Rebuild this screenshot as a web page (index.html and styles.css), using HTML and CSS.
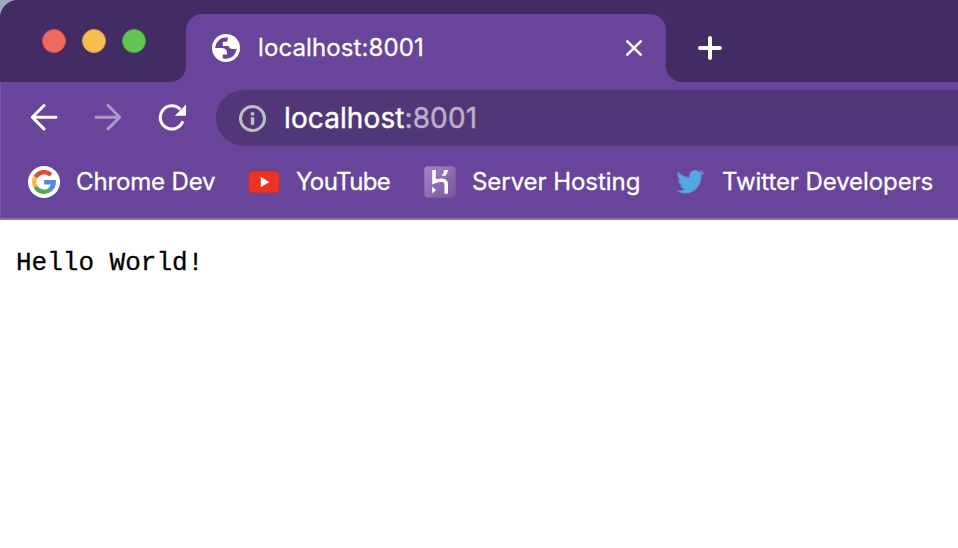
FILE: index.html
```html
<!DOCTYPE html>
<html lang="en">
<head>
<meta charset="utf-8">
<title>localhost:8001</title>
<link rel="stylesheet" href="styles.css">
</head>
<body>
<div class="window">
  <header class="chrome">
    <div class="tab-strip">
      <div class="controls">
        <span class="light red"></span><span class="light yellow"></span><span class="light green"></span>
      </div>
      <div class="tab-slot">
        <div class="tab">
          <svg class="globe" viewBox="0 0 28 28" width="28" height="28">
            <circle cx="14" cy="14" r="14" fill="#fff"/>
            <path fill="#68449a" d="M15.800 3.600A10.700 10.700 0 0 0 3.300 14H9.800C13 14 15 15.800 15 18.300V20.600H10.700V24.200A10.700 10.700 0 0 0 24.600 15H20.600C18.500 15 17 14 16.500 12H10.800V7.800H13.300C14.900 7.800 15.800 7 15.800 5.500Z"/>
          </svg>
          <span class="tab-title">localhost:8001</span>
          <svg class="close" viewBox="0 0 16 16" width="16" height="16"><path d="M1.300 1.300 14.700 14.700M14.700 1.300 1.300 14.700"/></svg>
        </div>
      </div>
      <div class="strip-rest">
        <svg class="plus" viewBox="0 0 24 24" width="24" height="24"><path d="M12 2V22M2 12H22"/></svg>
      </div>
    </div>
    <div class="toolbar">
      <nav class="nav">
        <svg viewBox="0 0 28 28" width="28" height="28"><path d="M26 14.200H2.500M14 2.500 2.300 14.200 14 25.900"/></svg>
        <svg class="disabled" viewBox="0 0 28 28" width="28" height="28"><path d="M2 14.200H25.500M14 2.500 25.700 14.200 14 25.900"/></svg>
        <svg viewBox="0 0 28 28" width="28" height="28"><path class="arc" d="M24.800 18.300A11.600 11.600 0 1 1 22.300 6.500"/><path class="solid" d="M28 1.500V12.700H16.800Z"/></svg>
      </nav>
      <div class="address">
        <svg viewBox="0 0 28 28" width="28" height="28"><circle cx="14.500" cy="14.500" r="12"/><path d="M12.800 8.200h3.400V11.500h-3.400zM12.800 13.300h3.400v7.500h-3.400z"/></svg>
        <span class="url">localhost<span class="port">:8001</span></span>
      </div>
    </div>
    <div class="bookmarks">
      <a class="bookmark">
        <svg viewBox="0 0 32 32" width="32" height="32">
          <circle cx="16" cy="16" r="16" fill="#fff"/>
          <g fill="none" stroke-width="4.400">
            <path stroke="#d94f3d" d="M22.900 9A9.800 9.800 0 0 0 7.500 11.200"/>
            <path stroke="#f3bd42" d="M7.600 11A9.800 9.800 0 0 0 7.600 21"/>
            <path stroke="#58a55c" d="M7.500 20.800A9.800 9.800 0 0 0 22.500 23.300"/>
            <path stroke="#5086ec" d="M22.300 23.500A9.800 9.800 0 0 0 25.700 16.200H16.200"/>
          </g>
        </svg>
        <span class="name chrome-dev">Chrome Dev</span>
      </a>
      <a class="bookmark">
        <svg viewBox="0 0 32 32" width="32" height="32"><path fill="#eb3223" stroke="#a5314e" stroke-width=".6" d="M4.500 5.200Q16 4.400 27.500 5.200 31.500 5.400 31.600 9.500V22.500Q31.500 26.600 27.500 26.800 16 27.600 4.500 26.800.5 26.600.4 22.500V9.500Q.5 5.400 4.500 5.200Z"/><path fill="#fff" d="M12.800 11V21.200L21.300 16.100Z"/></svg>
        <span class="name youtube">YouTube</span>
      </a>
      <a class="bookmark">
        <svg viewBox="0 0 32 32" width="32" height="32">
          <defs><linearGradient id="tile" x1="0" y1="0" x2="1" y2="1"><stop offset="0" stop-color="#a486c9"/><stop offset="1" stop-color="#765499"/></linearGradient></defs>
          <rect x=".3" y=".3" width="31.400" height="31.400" rx="4" fill="url(#tile)"/>
          <path fill="none" stroke="#fff" stroke-width="3.600" d="M10 4V15.800C15 13.900 22.200 12.900 22.200 18.200V27.700"/>
          <path fill="#fff" d="M8.200 20.800 12 24 8.200 27.400ZM20.300 4H24.200Q23.700 7.300 21.300 9.800H17.700Q19.900 7.200 20.300 4Z"/>
        </svg>
        <span class="name hosting">Server Hosting</span>
      </a>
      <a class="bookmark">
        <svg viewBox="0 0 32 32" width="32" height="32"><path fill="#50a8e8" stroke="#7e78bd" stroke-width=".7" d="M4 5.900Q8.700 11.200 15.700 11.500C14.600 7.200 17.500 4.200 21 4.200Q23.500 4.200 25.200 5.900L28.800 4.600 26.800 7.500 30 6.700 27.200 9.600C27.500 20.500 19.500 27.500 10.800 27.300Q6.800 27.200 3.600 25Q8.200 25.300 11.300 23Q7.500 22.700 6.300 19.400H8.700Q4.600 18 4.200 13.900L6.700 14.400Q2.400 11 4 5.900Z"/></svg>
        <span class="name twitter">Twitter Developers</span>
      </a>
    </div>
  </header>
  <main class="page"><pre class="output">Hello World!</pre></main>
</div>
</body>
</html>
```
FILE: styles.css
```css
* { box-sizing: border-box; }
body { margin: 0; background: #9aabbb; overflow: hidden; font-family: Inter, "Liberation Sans", sans-serif; }
svg { display: block; flex: none; }
.window { height: 548px; display: flex; flex-direction: column; overflow: hidden; border-radius: 18px 0 0 0; background: #fff; }
.chrome { height: 220px; background: #68449a; border-bottom: 2px solid #8b6bb3; box-shadow: inset 1px 0 #7955a5; }
.tab-strip { height: 82px; display: flex; }
.controls { width: 186px; padding: 29px 0 0 42px; display: flex; gap: 16px; background: #432b64; border-bottom-right-radius: 16px; }
.light { width: 24px; height: 24px; border-radius: 50%; border: 1px solid; }
.red { background: #ee6a5f; border-color: #d65349; }
.yellow { background: #f5bf4f; border-color: #d8a13d; }
.green { background: #62c655; border-color: #50a73e; }
.tab-slot { width: 480px; padding-top: 14px; background: #432b64; }
.tab { height: 68px; padding: 0 24px 0 26px; display: flex; align-items: center; border-radius: 16px 16px 0 0; background: #68449a; color: #fff; }
.tab-title { margin-left: 18px; flex: 1; font-size: 24px; line-height: 30px; letter-spacing: .1px; white-space: nowrap; -webkit-text-stroke: .3px; }
.close { fill: none; stroke: #fff; stroke-width: 2.600; stroke-linecap: round; }
.strip-rest { flex: 1; padding: 36px 0 0 32px; background: #432b64; border-bottom-left-radius: 16px; }
.plus { fill: none; stroke: #fff; stroke-width: 4; stroke-linecap: round; }
.toolbar { height: 72px; padding: 8px 0 8px 30px; display: flex; }
.nav { width: 186px; padding-top: 13px; display: flex; gap: 36px; fill: none; stroke: #fff; stroke-width: 3; stroke-linecap: round; stroke-linejoin: round; }
.disabled { opacity: .45; }
.arc { stroke-linecap: butt; }
.solid { fill: #fff; stroke: none; }
.address { flex: 1; height: 56px; padding-left: 22px; display: flex; align-items: center; border-radius: 28px 0 0 28px; background: #523778; }
.address circle { fill: none; stroke: #bdc1c6; stroke-width: 3; }
.address path { fill: #bdc1c6; }
.url { margin-left: 18px; color: #fff; font-size: 28px; line-height: 34px; letter-spacing: .1px; white-space: nowrap; -webkit-text-stroke: .4px; }
.port { color: #bdb0cb; }
.bookmarks { height: 64px; padding: 12px 0 0 28px; display: flex; align-items: flex-start; }
.bookmark { display: flex; align-items: center; color: #fff; }
.name { margin-left: 16px; font-size: 24px; line-height: 32px; white-space: nowrap; -webkit-text-stroke: .3px; }
.chrome-dev { width: 172px; letter-spacing: -.15px; }
.youtube { width: 128px; letter-spacing: -.6px; }
.hosting { width: 202px; letter-spacing: -.05px; }
.twitter { letter-spacing: -.08px; }
.page { flex: 1; padding: 28px 16px; background: #fff; }
.output { margin: 0; color: #000; font: 26px/30px "Courier New", "Liberation Mono", monospace; -webkit-text-stroke: .3px; }
```
